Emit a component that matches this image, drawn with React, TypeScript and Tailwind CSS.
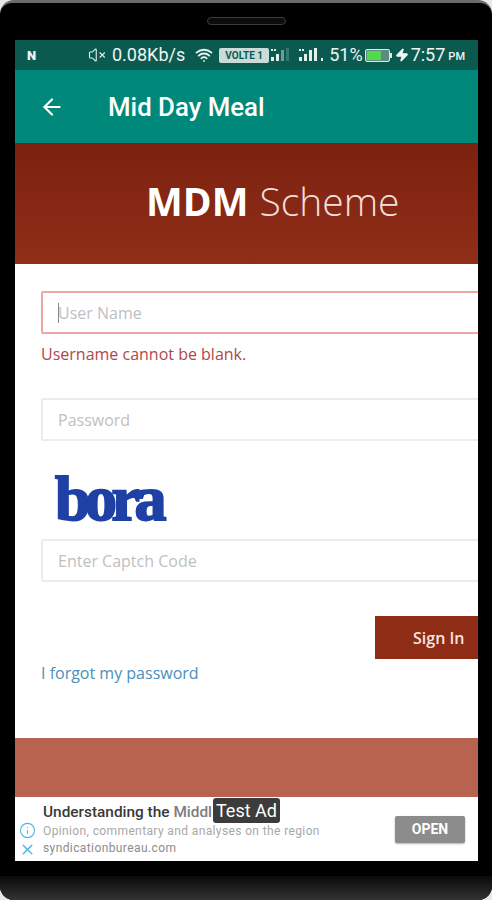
import { ArrowLeft, X, Info, VolumeX, Wifi, Zap } from 'lucide-react';

function Signal({ small }: { small?: boolean }) {
    return (
        <svg width="28" height="16" viewBox="0 0 28 16" className="shrink-0">
            <rect x="2" y="10" width="3" height="4" fill="#e4efec" />
            <rect x="7" y="7" width="3" height="7" fill="#e4efec" />
            <rect x="12" y="3" width="3" height="11" fill="#e4efec" opacity={small ? 0.45 : 1} />
            <rect x="17" y="1" width="3" height="13" fill="#e4efec" opacity={small ? 0.2 : 1} />
            <rect x="2" y="2" width="2" height="2" fill="#e4efec" />
            <rect x="5" y="2" width="2" height="2" fill="#e4efec" />
            {!small && <rect x="24" y="11" width="2" height="3" fill="#e4efec" />}
        </svg>
    );
}

function Battery() {
    return (
        <div className="flex items-center shrink-0">
            <div className="w-[25px] h-[13px] border border-[#dfeae7] rounded-[2px] bg-[#5f8a80] p-[1px]">
                <div className="w-[14px] h-full bg-[#53d84e]" />
            </div>
            <div className="w-[2px] h-[5px] bg-[#dfeae7]" />
        </div>
    );
}

function StatusBar() {
    return (
        <div className="h-[30px] shrink-0 bg-[#0b5a50] flex items-center text-[#eef5f3] font-['Roboto',sans-serif] whitespace-nowrap">
            <span className="ml-[12px] w-[14px] text-[13px] font-black leading-none">N</span>
            <VolumeX size={18} strokeWidth={1.5} className="ml-[47px] shrink-0 text-[#dfeae7]" />
            <span className="ml-[6px] text-[18px] leading-none">0.08Kb/s</span>
            <Wifi size={18} strokeWidth={2.5} className="ml-[10px] shrink-0 text-[#e4efec]" />
            <span className="ml-[6px] h-[15px] w-[50px] shrink-0 rounded-[2px] bg-[#c9dcd7] text-[#0b5a50] text-[10px] font-bold leading-[15px] text-center">VOLTE 1</span>
            <span className="w-[24px] shrink-0 overflow-hidden"><Signal small /></span>
            <span className="ml-[4px]"><Signal /></span>
            <span className="ml-[4px] text-[18px] leading-none">51%</span>
            <span className="ml-[2px]"><Battery /></span>
            <Zap size={14} fill="#eef5f3" className="ml-[3px] shrink-0" />
            <span className="ml-[2px] text-[18px] leading-none">7:57</span>
            <span className="ml-[3px] text-[11px] font-medium leading-none mt-[3px]">PM</span>
        </div>
    );
}

function Field({ placeholder, error, caret }: { placeholder: string; error?: boolean; caret?: boolean }) {
    return (
        <div
            className={
                error
                    ? "h-[43px] w-[460px] shrink-0 border-2 border-[#eda7a1] rounded-[2px] flex items-center pl-[15px]"
                    : "h-[43px] w-[460px] shrink-0 border-2 border-[#ececec] rounded-[2px] flex items-center pl-[15px]"
            }
        >
            {caret && <span className="w-[1px] h-[20px] bg-[#8a8a8a] -mr-[1px]" />}
            <span className="text-[16px] text-[#c0c0c0]">{placeholder}</span>
        </div>
    );
}

export default function App() {
    return (
        <div className="w-[492px] h-[900px] bg-[#e8e8e8] overflow-hidden font-['Open_Sans',sans-serif]">
            <div className="h-[900px] pt-[3px] bg-[#6a6a6a] rounded-t-[14px] rounded-b-[14px] overflow-hidden">
                <div className="h-[897px] bg-black rounded-t-[12px] flex flex-col">
                    {/* speaker */}
                    <div className="h-[37px] shrink-0 flex justify-center pt-[14px]">
                        <div className="w-[79px] h-[8px] rounded-full border border-[#3c3c3c] bg-[#0c0c0c]" />
                    </div>

                    <div className="ml-[15px] w-[463px] h-[821px] shrink-0 flex flex-col overflow-hidden bg-white">
                        <StatusBar />

                        <div className="h-[73px] shrink-0 bg-[#00897b] flex items-center text-white">
                            <ArrowLeft size={26} strokeWidth={2} className="ml-[24px]" />
                            <span className="ml-[43px] mt-[2px] text-[25.8px] font-medium font-['Roboto',sans-serif]">Mid Day Meal</span>
                        </div>

                        <div className="h-[121px] shrink-0 bg-gradient-to-b from-[#7c2110] to-[#902e18] flex items-center pl-[131px] pb-[6px] text-white text-[39px] leading-none">
                            <span className="font-bold">MDM</span>
                            <span className="ml-[11px] font-light text-[#f2dfd9]">Scheme</span>
                        </div>

                        <div className="h-[474px] shrink-0 flex flex-col pl-[26px] pt-[27px]">
                            <Field placeholder="User Name" error caret />
                            <p className="mt-[8px] h-[24px] text-[16px] leading-[24px] text-[#b0474a]">Username cannot be blank.</p>
                            <div className="mt-[32px]">
                                <Field placeholder="Password" />
                            </div>
                            <div className="h-[98px] shrink-0 pl-[14px] pt-[33px]">
                                <span className="block text-[64px] leading-[50px] font-bold tracking-[-5.5px] text-[#1f41a5] [-webkit-text-stroke:2px_#1f41a5] font-['Liberation_Serif',serif]">bora</span>
                            </div>
                            <Field placeholder="Enter Captch Code" />
                            <div className="mt-[34px] h-[43px] shrink-0 flex justify-end">
                                <button className="w-[103px] h-[43px] bg-[#8f2c16] text-[#f6e6e0] text-[16px] font-semibold text-left pl-[38px]">Sign In</button>
                            </div>
                            <a className="mt-[1px] text-[16px] leading-[26px] text-[#4b8fbc]">I forgot my password</a>
                        </div>

                        <div className="h-[59px] shrink-0 bg-[#b86350]" />

                        {/* ad banner */}
                        <div className="h-[64px] shrink-0 bg-white flex font-['Roboto',sans-serif] relative whitespace-nowrap">
                            <div className="w-[24px] shrink-0 flex flex-col items-center pt-[25px] gap-[2px] text-[#4fb5e6]">
                                <Info size={17} strokeWidth={1.6} />
                                <X size={17} strokeWidth={2} />
                            </div>
                            <div className="flex-1 pt-[5px] pl-[4px]">
                                <p className="text-[15.4px] leading-[20px] font-medium text-[#3a3a3a]">Understanding the <span className="text-[#7d7d7d]">Middl</span></p>
                                <p className="text-[12px] leading-[18px] text-[#a8a8a8] tracking-[0.38px]">Opinion, commentary and analyses on the region</p>
                                <p className="text-[12px] leading-[16px] text-[#8c8c8c] tracking-[0.4px]">syndicationbureau.com</p>
                            </div>
                            <div className="flex items-start pt-[19px] pr-[13px]">
                                <button className="w-[70px] h-[27px] bg-[#8c8c8c] rounded-[2px] shadow-[0_1px_2px_rgba(0,0,0,0.3)] text-white text-[14px] font-bold">OPEN</button>
                            </div>
                            <span className="absolute left-[198px] top-[1px] h-[25px] px-[3px] rounded-[3px] bg-[#3c3c3c] text-white text-[18px] leading-[25px]">Test Ad</span>
                        </div>
                    </div>

                    {/* bottom bezel */}
                    <div className="h-[15px] shrink-0" />
                    <div className="flex-1 bg-gradient-to-b from-[#0a0a0a] to-[#333333]" />
                </div>
            </div>
        </div>
    );
}
